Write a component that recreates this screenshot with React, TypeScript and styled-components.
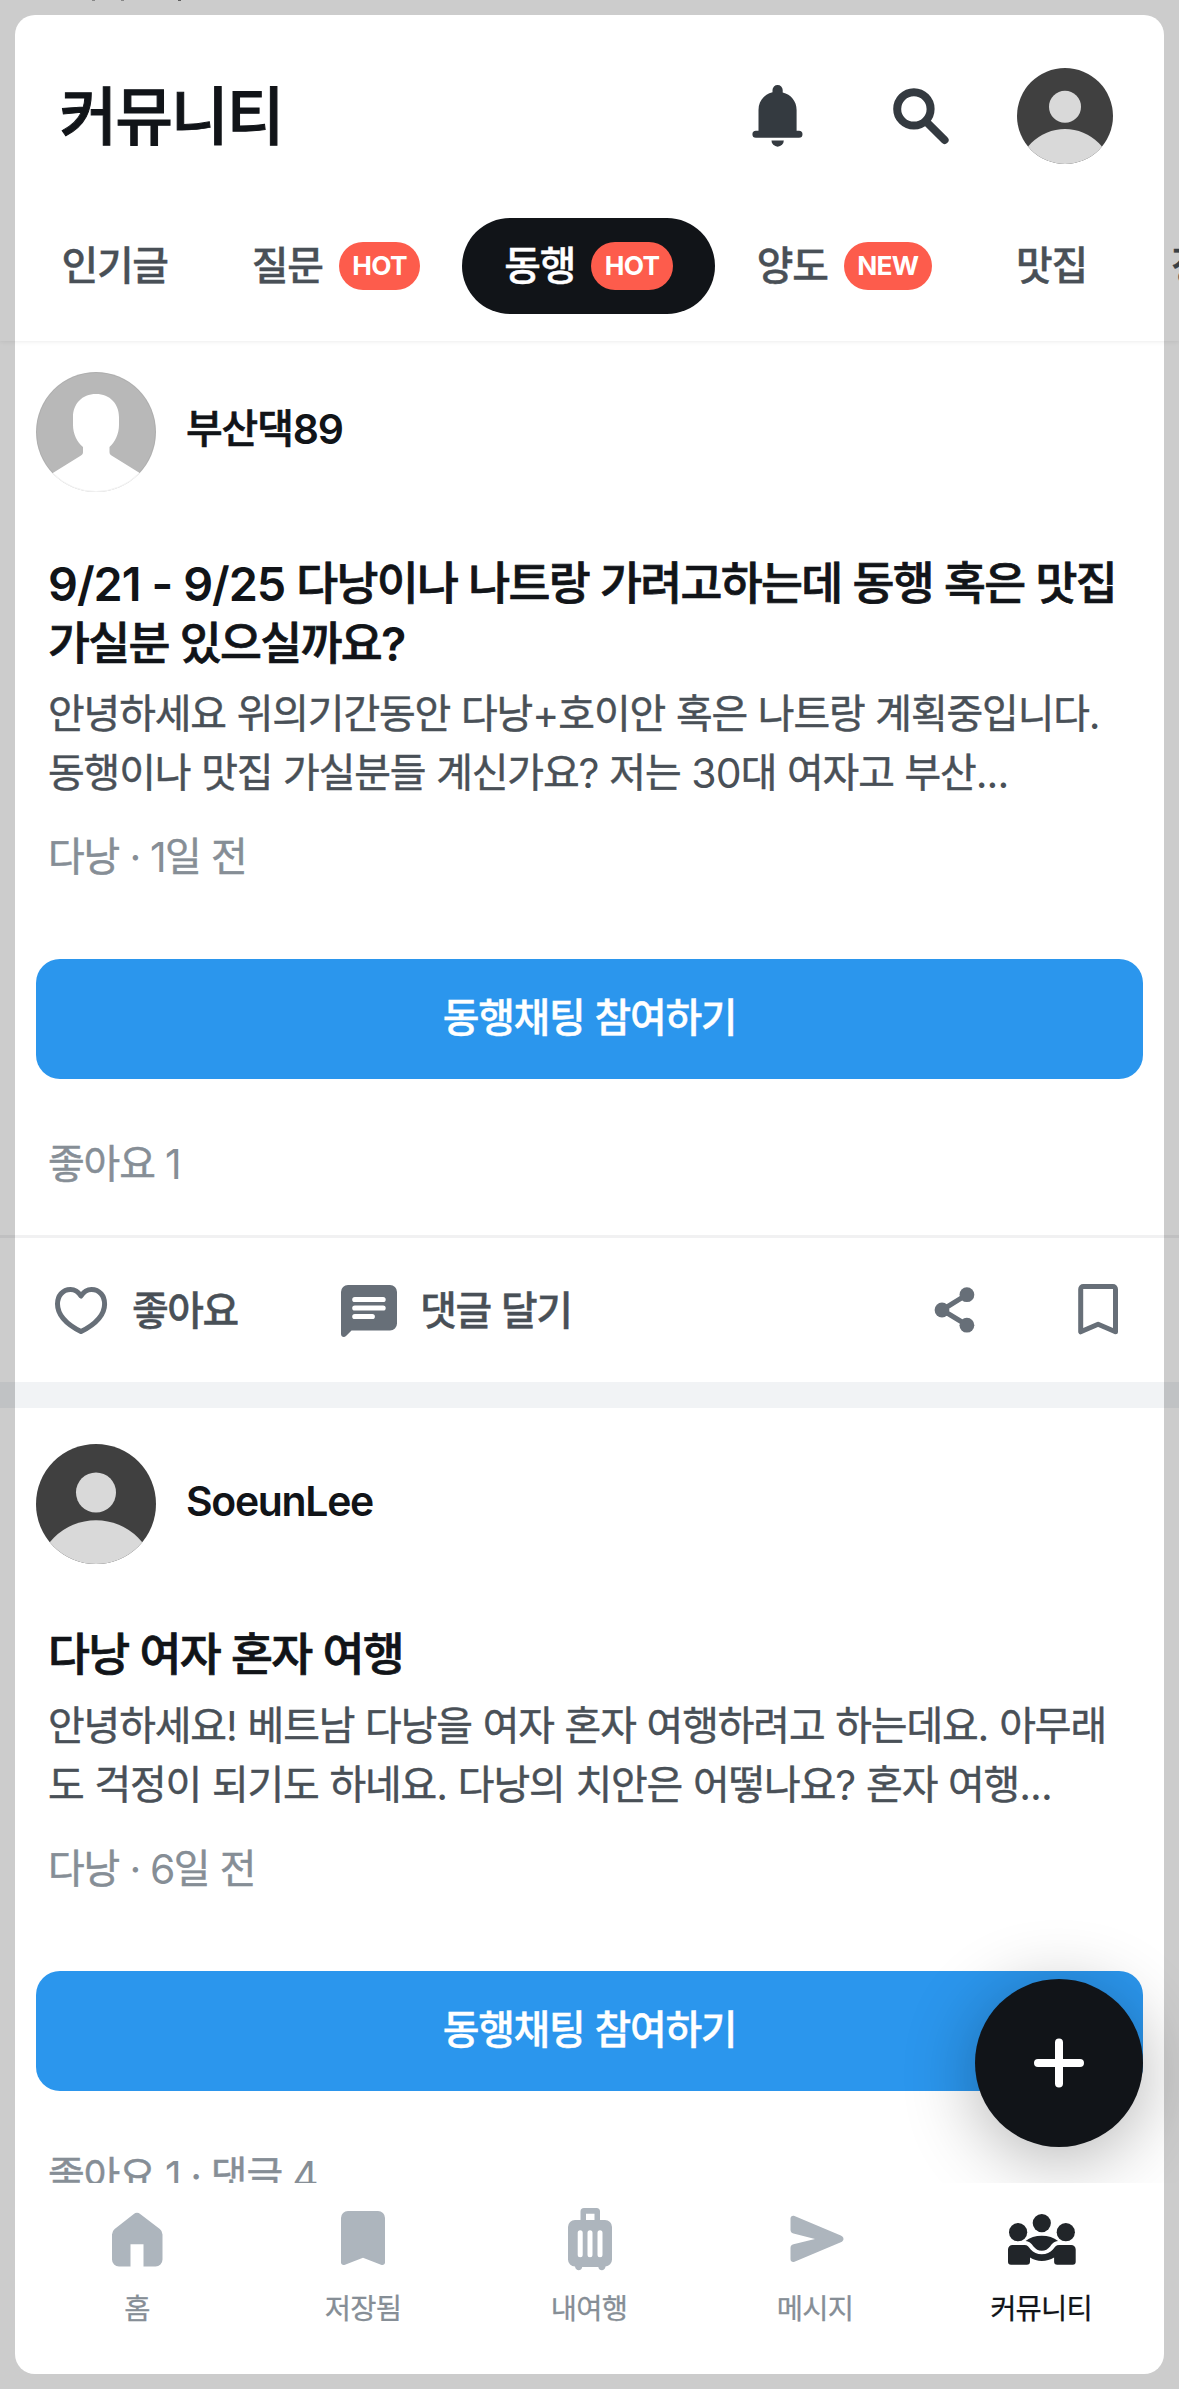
import React from "react";
import styled, { createGlobalStyle } from "styled-components";

const Global = createGlobalStyle`
  * { box-sizing: border-box; }
  html, body { margin: 0; padding: 0; background: #fff; }
  body {
    font-family: Inter, "Noto Sans CJK KR", sans-serif;
    color: #111418;
    overflow: hidden;
  }
`;

const Latin = styled.span`
  font-size: 0.975em;
  line-height: 1;
  letter-spacing: -0.022em;
  word-spacing: 0.004em;
`;

const Hangul = styled.span<{ $semibold?: boolean; $stroke?: number }>`
  font-size: 0.95em;
  line-height: 1;
  vertical-align: 0.015em;
  letter-spacing: -0.028em;
  font-weight: ${(p) => (p.$semibold ? 500 : "inherit")};
  -webkit-text-stroke: ${(p) => p.$stroke ?? (p.$semibold ? 0.016 : 0)}em currentColor;
`;

/* Hangul is set a little smaller than the Latin runs beside it. */
const T = ({
  children,
  semibold,
  stroke,
}: {
  children: string;
  semibold?: boolean;
  stroke?: number;
}) => (
  <>
    {children.split(/([^\u3131-\uD79D\n]+)/).map((part, i) =>
      i % 2 ? (
        <Latin key={i}>{part}</Latin>
      ) : (
        <Hangul key={i} $semibold={semibold} $stroke={stroke}>
          {part}
        </Hangul>
      )
    )}
  </>
);

const Screen = styled.div`
  position: relative;
  display: flex;
  flex-direction: column;
  width: 1179px;
  height: 2389px;
  overflow: hidden;
  background: #fff;
`;

const Frame = styled.div`
  position: absolute;
  inset: 15px;
  border-radius: 20px;
  box-shadow: 0 0 0 60px rgba(0, 0, 0, 0.2);
  pointer-events: none;
  z-index: 10;
`;

const Header = styled.header`
  flex: none;
  height: 341px;
  background: #fff;
  box-shadow: 0 0 5px rgba(0, 0, 0, 0.1);
  z-index: 2;
`;

const StatusEdge = styled.div`
  display: flex;
  gap: 26px;
  height: 1px;
  padding-left: 92px;
`;

const StatusMark = styled.i`
  width: 3px;
  height: 1px;
  background: #aaa;
  &:last-child { margin-left: 28px; background: #777; }
`;

const TopBar = styled.div`
  display: flex;
  align-items: center;
  justify-content: space-between;
  padding: 67px 66px 0 59.5px;
`;

const PageTitle = styled.h1`
  margin: 0;
  font-size: 66px;
  line-height: 96px;
  font-weight: 600;
  ${Hangul} { letter-spacing: -0.031em; }
`;

const TopActions = styled.div`
  display: flex;
  align-items: center;
  gap: 72px;
  color: #343a40;
  svg:last-child { margin-left: -12px; }
`;

const Tabs = styled.nav`
  display: flex;
  margin: 54px 0 0 19.5px;
  ${Hangul} { letter-spacing: -0.032em; }
`;

const Tab = styled.div<{ $active?: boolean }>`
  flex: none;
  display: flex;
  align-items: center;
  gap: 16px;
  height: 96px;
  padding: 0 42px;
  border-radius: 48px;
  font-size: 42px;
  font-weight: 500;
  color: ${(p) => (p.$active ? "#fff" : "#495057")};
  background: ${(p) => (p.$active ? "#111418" : "transparent")};
`;

const TabLabel = styled.span`
  line-height: 60px;
`;

const Badge = styled.span`
  height: 48px;
  padding: 0 13.5px;
  border-radius: 24px;
  background: #fd5c4c;
  color: #fff;
  font-size: 26.3px;
  line-height: 48px;
  font-weight: 700;
  letter-spacing: -0.025em;
`;

const Feed = styled.main`
  flex: none;
  height: 1842px;
  overflow: hidden;
  position: relative;
`;

const Post = styled.article<{ $top: number }>`
  padding-top: ${(p) => p.$top}px;
  border-bottom: 26px solid #f1f3f5;
`;

const Author = styled.div`
  display: flex;
  align-items: center;
  gap: 30px;
  height: 120px;
  padding: 0 36px;
`;

const Name = styled.div`
  font-size: 42px;
  line-height: 60px;
  font-weight: 600;
  white-space: nowrap;
  padding-bottom: 6px;
  ${Latin} { letter-spacing: -0.032em; }
`;

const Content = styled.div`
  padding: 61.5px 48px 0;
`;

const Title = styled.h2`
  margin: 0 0 11.5px;
  font-size: 48px;
  line-height: 60px;
  font-weight: 600;
  white-space: pre;
  ${Hangul} { letter-spacing: -0.037em; }
`;

const Body = styled.p`
  margin: 0 0 25.6px;
  font-size: 42px;
  line-height: 58.8px;
  color: #495057;
  white-space: pre;
`;

const Meta = styled.p`
  margin: 0;
  font-size: 42px;
  line-height: 58.8px;
  color: #868e96;
  white-space: pre;
  ${Latin} { letter-spacing: -0.036em; }
`;

const Join = styled.button`
  display: block;
  width: 1107px;
  height: 120px;
  margin: 72px 36px 56.5px;
  padding: 0 0 2px;
  border: 0;
  border-radius: 24px;
  background: #2b96ed;
  color: #fff;
  font: 500 42px Inter, "Noto Sans CJK KR", sans-serif;
  ${Hangul} { letter-spacing: -0.032em; }
`;

const Likes = styled(Meta)`
  padding: 0 48px 40.7px;
`;

const Actions = styled.div`
  display: flex;
  align-items: center;
  height: 147px;
  padding: 0 45px;
  border-top: 3px solid #f1f1f2;
  color: #495057;
  font-size: 42px;
  font-weight: 500;
  svg { color: #676f78; }
  ${Hangul} { letter-spacing: -0.036em; }
`;

const Action = styled.div`
  display: flex;
  align-items: center;
  gap: 15px;
  margin-right: 95.4px;
  padding-top: 3px;
  white-space: pre;
`;

const ActionLabel = styled.span`
  line-height: 60px;
  padding-bottom: 1px;
`;

const IconActions = styled.div`
  display: flex;
  gap: 72px;
  margin-left: auto;
`;

const Fab = styled.button`
  position: absolute;
  right: 36px;
  bottom: 36px;
  display: grid;
  place-items: center;
  width: 168px;
  height: 168px;
  padding: 0;
  border: 0;
  border-radius: 50%;
  background: #111418;
  color: #fff;
  box-shadow: 0 12px 72px rgba(0, 0, 0, 0.3);
`;

const BottomNav = styled.nav`
  flex: 1;
  display: grid;
  grid-template-columns: repeat(5, 226px);
  padding: 20px 0 0 24px;
  background: #fff;
  z-index: 3;
`;

const NavItem = styled.div<{ $active?: boolean }>`
  display: flex;
  flex-direction: column;
  align-items: center;
  gap: 12px;
  font-size: 30px;
  line-height: 42px;
  color: ${(p) => (p.$active ? "#111418" : "#868e96")};
  svg { color: ${(p) => (p.$active ? "#212529" : "#adb5bd")}; }
`;

const Icon = ({ children }: { children: React.ReactNode }) => (
  <svg width="72" height="72" viewBox="0 0 72 72" fill="currentColor">
    {children}
  </svg>
);

const BellIcon = () => (
  <Icon>
    <path d="M36.6 5a5.1 5.1 0 0 1 5.1 5.1v2.3C50 14.5 55.6 21 55.6 30v20.7H58a3.5 3.5 0 0 1 0 7H14.9a3.5 3.5 0 0 1 0-7h2.6V30c0-9 5.6-15.5 14-17.7v-2.2A5.1 5.1 0 0 1 36.6 5z" />
    <path d="M30.5 60.5h12.3a6.1 6.1 0 0 1-12.3 0z" />
  </Icon>
);

const SearchIcon = () => (
  <Icon>
    <circle cx="28.9" cy="28.9" r="16.7" fill="none" stroke="currentColor" strokeWidth="8" />
    <path d="M41 41.5L59.6 60" stroke="currentColor" strokeWidth="8" strokeLinecap="round" />
  </Icon>
);

const PersonAvatar = ({ size }: { size: number }) => (
  <svg width={size} height={size} viewBox="0 0 96 96">
    <clipPath id={`person${size}`}>
      <circle cx="48" cy="48" r="48" />
    </clipPath>
    <g clipPath={`url(#person${size})`}>
      <rect width="96" height="96" fill="#404040" />
      <circle cx="48" cy="38.8" r="16" fill="#d9d9d9" />
      <circle cx="48" cy="108.7" r="47.7" fill="#d9d9d9" />
    </g>
  </svg>
);

const BlankAvatar = () => (
  <svg width="120" height="120" viewBox="0 0 120 120">
    <clipPath id="blank">
      <circle cx="60" cy="60" r="60" />
    </clipPath>
    <g clipPath="url(#blank)">
      <rect width="120" height="120" fill="#b8b8b8" />
      <path
        d="M60 22C46 22 37 32 37 45v8c0 9 4 17 10 22v5c0 1.500-.5 2.500-2 3.500L16.800 101 0 112v8h120v-8l-16.300-11L75.500 83.500c-1.500-1-2-2-2-3.500v-5C79 70 83 62 83 53v-8C83 32 74 22 60 22z"
        fill="#fff"
      />
    </g>
    <circle cx="60" cy="60" r="59.5" fill="none" stroke="#000" strokeOpacity=".05" />
  </svg>
);

const HeartIcon = () => (
  <Icon>
    <path
      d="M36 21C33.500 17 30 14.500 25.500 14.500c-8 0-13 6.500-13 14.500C12.500 41 22 49.500 36 56.600 50 49.500 59.600 41 59.600 29c0-8-5-14.500-13.100-14.500C42 14.500 38.500 17 36 21z"
      fill="none"
      stroke="currentColor"
      strokeWidth="5"
      strokeLinejoin="round"
    />
  </Icon>
);

const CommentIcon = () => (
  <Icon>
    <path d="M15 10h42a7 7 0 0 1 7 7v31.500a7 7 0 0 1-7 7H18.500l-5.500 5.500c-2 1.800-5 .8-5-2V17a7 7 0 0 1 7-7z" />
    <path d="M21.800 24.500h28.300M21.800 33h28.300M21.800 41.500h17.500" stroke="#fff" strokeWidth="5.2" strokeLinecap="round" />
  </Icon>
);

const ShareIcon = () => (
  <Icon>
    <path d="M48.900 20.700L24 36l24.900 15" fill="none" stroke="currentColor" strokeWidth="5" />
    <circle cx="48.9" cy="20.7" r="7.4" />
    <circle cx="24" cy="36" r="7.4" />
    <circle cx="48.9" cy="51.2" r="7.4" />
  </Icon>
);

const BookmarkIcon = () => (
  <Icon>
    <path
      d="M18.700 57.800V15.200a2.600 2.600 0 0 1 2.600-2.600h29.600a2.600 2.600 0 0 1 2.600 2.600v42.600L36.100 50.300z"
      fill="none"
      stroke="currentColor"
      strokeWidth="5"
      strokeLinejoin="round"
    />
  </Icon>
);

const HomeIcon = () => (
  <Icon>
    <path d="M32.500 11.200a5.500 5.500 0 0 1 7 0L58.800 26a7 7 0 0 1 2.700 5.500V56.500a7 7 0 0 1-7 7h-12V41.300h-13V63.500H18a7 7 0 0 1-7-7V31.500A7 7 0 0 1 13.700 26z" />
  </Icon>
);

const SavedIcon = () => (
  <Icon>
    <path d="M21 8h30a7 7 0 0 1 7 7v44.500c0 2-2 3-4 2.200L36 54.700 18 61.700c-2 .8-4-.2-4-2.200V15a7 7 0 0 1 7-7z" />
  </Icon>
);

const LuggageIcon = () => (
  <svg width="72" height="72" viewBox="-1 0 72 72" fill="currentColor">
    <path
      fillRule="evenodd"
      d="M30 5h12.500a3.500 3.500 0 0 1 3.500 3.500V17h5a7 7 0 0 1 7 7v32.500a7 7 0 0 1-6.500 7c-.5 5-6.500 5-7.200.5H28.200c-.7 4.500-6.500 4.500-7.200-.5a7 7 0 0 1-7-7V24a7 7 0 0 1 7-7h5.500V8.500A3.500 3.500 0 0 1 30 5zM32 10.700V17h8.500V10.700z"
    />
    <path d="M26.200 29.700v22M36 29.700v22M46 29.700v22" stroke="#fff" strokeWidth="5" strokeLinecap="round" />
  </svg>
);

const SendIcon = () => (
  <Icon>
    <path d="M11.500 15.500c0-2.200 2-3.400 4-2.500L61.800 32.500c3.600 1.500 3.600 5.300 0 6.800L15.500 58.700c-2 .9-4-.3-4-2.500V45c0-2 1-3.300 3-3.700L36 36 14.500 30.500c-2-.4-3-1.700-3-3.700z" />
  </Icon>
);

const CommunityIcon = () => (
  <Icon>
    <circle cx="36.8" cy="20.1" r="9.1" />
    <circle cx="13.1" cy="29.2" r="9.1" />
    <circle cx="60.8" cy="29.2" r="9.1" />
    <path d="M20.500 38.100c4.300-3.600 10-5.400 16.300-5.400s12 1.800 16.300 5.400c-4.500.5-6 3-8 5.300-2.300 2.600-4.800 4.400-8.300 4.400s-6-1.800-8.300-4.400c-2-2.300-3.500-4.800-8-5.300z" />
    <path d="M7.500 42H19.500c3 0 4.200 2 6.200 4.500 2.700 3 6.500 4.700 11.100 4.700S45.200 49.500 47.900 46.500c2-2.500 3.200-4.500 6.200-4.500h12.100a4.500 4.500 0 0 1 4.500 4.500v12.200a3 3 0 0 1-3 3H52.300a3.200 3.200 0 0 1-3.200-3.200V54.500c-3.600 2.200-7.800 3.400-12.300 3.400s-8.200-1.200-11.800-3.400v4a3.200 3.200 0 0 1-3.200 3.200H6a3 3 0 0 1-3-3V46.500A4.500 4.500 0 0 1 7.500 42z" />
  </Icon>
);

const PlusIcon = () => (
  <Icon>
    <path d="M36 15.500v41M15 36h42" stroke="currentColor" strokeWidth="8" strokeLinecap="round" />
  </Icon>
);

type PostData = {
  top: number;
  avatar: React.ReactNode;
  name: string;
  title: string;
  body: string;
  meta: string;
  likes: string;
};

const posts: PostData[] = [
  {
    top: 31,
    avatar: <BlankAvatar />,
    name: "부산댁89",
    title: "9/21 - 9/25 다낭이나 나트랑 가려고하는데 동행 혹은 맛집\n가실분 있으실까요?",
    body: "안녕하세요 위의기간동안 다낭+호이안 혹은 나트랑 계획중입니다.\n동행이나 맛집 가실분들 계신가요? 저는 30대 여자고 부산...",
    meta: "다낭 · 1일 전",
    likes: "좋아요 1",
  },
  {
    top: 36,
    avatar: <PersonAvatar size={120} />,
    name: "SoeunLee",
    title: "다낭 여자 혼자 여행",
    body: "안녕하세요! 베트남 다낭을 여자 혼자 여행하려고 하는데요. 아무래\n도 걱정이 되기도 하네요. 다낭의 치안은 어떻나요? 혼자 여행...",
    meta: "다낭 · 6일 전",
    likes: "좋아요 1 · 댓글 4",
  },
];

const tabs = [
  { label: "인기글" },
  { label: "질문", badge: "HOT" },
  { label: "동행", badge: "HOT", active: true },
  { label: "양도", badge: "NEW" },
  { label: "맛집" },
  { label: "정보" },
];

const navItems = [
  { label: "홈", icon: <HomeIcon /> },
  { label: "저장됨", icon: <SavedIcon /> },
  { label: "내여행", icon: <LuggageIcon /> },
  { label: "메시지", icon: <SendIcon /> },
  { label: "커뮤니티", icon: <CommunityIcon />, active: true },
];

export default function App() {
  return (
    <Screen>
      <Global />
      <Header>
        <StatusEdge>
          <StatusMark />
          <StatusMark />
          <StatusMark />
        </StatusEdge>
        <TopBar>
          <PageTitle>
            <T semibold>커뮤니티</T>
          </PageTitle>
          <TopActions>
            <BellIcon />
            <SearchIcon />
            <PersonAvatar size={96} />
          </TopActions>
        </TopBar>
        <Tabs>
          {tabs.map((t) => (
            <Tab key={t.label} $active={t.active}>
              <TabLabel>
                <T stroke={0.01}>{t.label}</T>
              </TabLabel>
              {t.badge && <Badge>{t.badge}</Badge>}
            </Tab>
          ))}
        </Tabs>
      </Header>
      <Feed>
        {posts.map((p) => (
          <Post key={p.name} $top={p.top}>
            <Author>
              {p.avatar}
              <Name>
                <T semibold>{p.name}</T>
              </Name>
            </Author>
            <Content>
              <Title>
                <T semibold>{p.title}</T>
              </Title>
              <Body>
                <T stroke={0.012}>{p.body}</T>
              </Body>
              <Meta>
                <T stroke={0.012}>{p.meta}</T>
              </Meta>
            </Content>
            <Join>
              <T stroke={0.01}>동행채팅 참여하기</T>
            </Join>
            <Likes>
              <T stroke={0.012}>{p.likes}</T>
            </Likes>
            <Actions>
              <Action>
                <HeartIcon />
                <ActionLabel>
                  <T stroke={0.01}>좋아요</T>
                </ActionLabel>
              </Action>
              <Action>
                <CommentIcon />
                <ActionLabel>
                  <T stroke={0.01}>댓글 달기</T>
                </ActionLabel>
              </Action>
              <IconActions>
                <ShareIcon />
                <BookmarkIcon />
              </IconActions>
            </Actions>
          </Post>
        ))}
        <Fab>
          <PlusIcon />
        </Fab>
      </Feed>
      <BottomNav>
        {navItems.map((n) => (
          <NavItem key={n.label} $active={n.active}>
            {n.icon}
            <span>
              <T stroke={0.01}>{n.label}</T>
            </span>
          </NavItem>
        ))}
      </BottomNav>
      <Frame />
    </Screen>
  );
}
